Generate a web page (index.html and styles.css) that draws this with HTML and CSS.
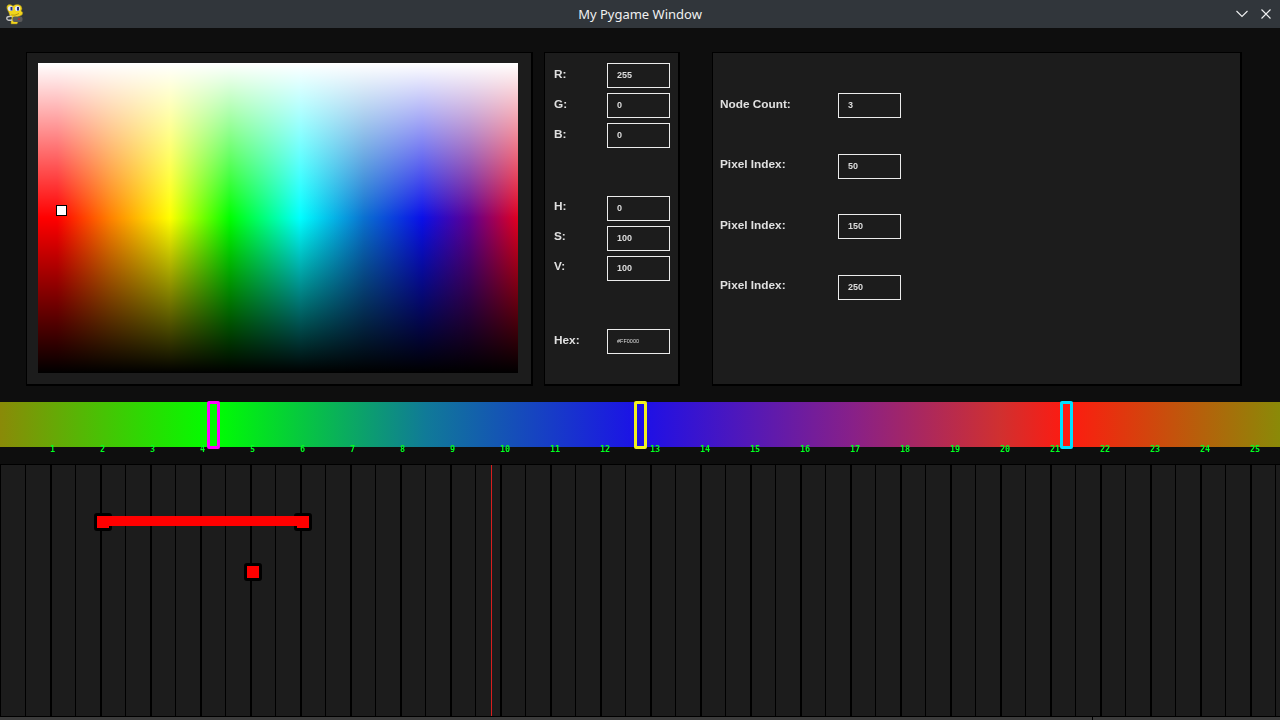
FILE: index.html
```html
<!DOCTYPE html>
<html lang="en">
<head>
    <meta charset="UTF-8">
    <title>My Pygame Window</title>
    <link rel="stylesheet" href="styles.css">
</head>
<body>
    <!-- Title bar -->
    <header class="titlebar">
        <svg class="app-icon" width="18" height="21" viewBox="0 0 18 21">
            <path d="M3 9 L1 5 Q0 1 3 0.5 Q5 0 7 2 Q9 0 12 0.5 Q16 1 16 5 L15 7 Q18 8 16 11 L12 13 L12 18 L11 20 L5 20 L5 17 L6 13 Q3 12 3 9 Z" fill="#f2d41c" stroke="#8a7a20" stroke-width="0.5"/>
            <circle cx="4.5" cy="4.5" r="2.6" fill="#dfe6f2"/>
            <circle cx="11.5" cy="4.5" r="2.6" fill="#dfe6f2"/>
            <rect x="4.5" y="3" width="2" height="3.5" fill="#27307a"/>
            <rect x="11" y="3" width="2" height="3.5" fill="#27307a"/>
            <path d="M5 11 Q9 12 13 9.5" stroke="#a8890f" fill="none" stroke-width="0.8"/>
            <path d="M6 12.5 Q0.5 12 0.8 14.5 Q1 17 6 16" stroke="#c6c6c6" stroke-width="1.4" fill="none"/>
            <rect x="6.5" y="12.5" width="10" height="5.5" rx="2" fill="#5a5a5a"/>
            <rect x="12" y="14" width="2" height="2" fill="#a33535"/>
        </svg>
        <span class="title">My Pygame Window</span>
        <div class="window-buttons">
            <svg width="12" height="8" viewBox="0 0 12 8"><path d="M0.5 1 L6 6.5 L11.5 1" stroke="#eff0f1" fill="none" stroke-width="1.1"/></svg>
            <svg width="10" height="10" viewBox="0 0 10 10"><path d="M0.5 0.5 L9.5 9.5 M9.5 0.5 L0.5 9.5" stroke="#eff0f1" fill="none" stroke-width="1.1"/></svg>
        </div>
    </header>

    <main class="app">
        <section class="top-row">
            <!-- Colour picker -->
            <div class="panel picker-panel">
                <div class="picker">
                    <span class="picker-handle"></span>
                </div>
            </div>

            <!-- Colour values -->
            <div class="panel values-panel">
                <div class="field-group">
                    <div class="field"><label>R:</label><div class="input">255</div></div>
                    <div class="field"><label>G:</label><div class="input">0</div></div>
                    <div class="field"><label>B:</label><div class="input">0</div></div>
                </div>
                <div class="field-group hsv-group">
                    <div class="field"><label>H:</label><div class="input">0</div></div>
                    <div class="field"><label>S:</label><div class="input">100</div></div>
                    <div class="field"><label>V:</label><div class="input">100</div></div>
                </div>
                <div class="field-group">
                    <div class="field"><label>Hex:</label><div class="input input-small">#FF0000</div></div>
                </div>
            </div>

            <!-- Nodes -->
            <div class="panel nodes-panel">
                <div class="node-field"><label>Node Count:</label><div class="input">3</div></div>
                <div class="node-field"><label>Pixel Index:</label><div class="input">50</div></div>
                <div class="node-field"><label>Pixel Index:</label><div class="input">150</div></div>
                <div class="node-field"><label>Pixel Index:</label><div class="input">250</div></div>
            </div>
        </section>

        <!-- LED strip preview -->
        <section class="strip">
            <span class="strip-marker marker-magenta"></span>
            <span class="strip-marker marker-yellow"></span>
            <span class="strip-marker marker-cyan"></span>
        </section>
        <div class="ruler">
            <span>1</span><span>2</span><span>3</span><span>4</span><span>5</span>
            <span>6</span><span>7</span><span>8</span><span>9</span><span>10</span>
            <span>11</span><span>12</span><span>13</span><span>14</span><span>15</span>
            <span>16</span><span>17</span><span>18</span><span>19</span><span>20</span>
            <span>21</span><span>22</span><span>23</span><span>24</span><span>25</span>
        </div>

        <!-- Timeline -->
        <section class="timeline">
            <span class="playhead"></span>
            <span class="clip-bar"></span>
            <span class="clip-node node-a"></span>
            <span class="clip-node node-b"></span>
            <span class="clip-node node-c"></span>
        </section>
        <div class="scrollbar"><span class="scroll-thumb"></span></div>
    </main>
</body>
</html>
```

FILE: styles.css
```css
* {
    margin: 0;
    padding: 0;
    box-sizing: border-box;
}

body {
    width: 1280px;
    height: 720px;
    overflow: hidden;
    background-color: #0e0e0e;
    font-family: 'Liberation Sans', Arial, sans-serif;
    color: #e6e6e6;
}

/* Title bar */
.titlebar {
    height: 28px;
    background-color: #31363b;
    display: flex;
    align-items: center;
    justify-content: center;
    position: relative;
}

.app-icon {
    position: absolute;
    left: 6px;
    top: 4px;
}

.title {
    font-family: 'Noto Sans', sans-serif;
    font-size: 13px;
    color: #eff0f1;
}

.window-buttons {
    position: absolute;
    right: 9px;
    top: 9px;
    display: flex;
    align-items: center;
    gap: 13px;
}

/* Top panels */
.top-row {
    display: flex;
    height: 334px;
    margin-top: 24px;
    padding-left: 26px;
}

.panel {
    background-color: #1c1c1c;
    border-style: solid;
    border-color: #000;
    border-width: 1px 2px 2px 1px;
    height: 100%;
}

.picker-panel {
    width: 507px;
    padding: 10px 11px;
}

.picker {
    width: 480px;
    height: 310px;
    position: relative;
    background:
        linear-gradient(to bottom, rgba(255, 255, 255, 1) 0, rgba(255, 255, 255, 0) 50%, rgba(0, 0, 0, 0) 50%, rgba(0, 0, 0, 1) 100%),
        linear-gradient(to right, #ff0000 0, #ff0000 4%, #ff8000 15%, #ffff00 27.5%, #00ff00 40%, #00ffff 54.6%, #0a70d0 68%, #0a10e8 80%, #600090 90%, #e00020 100%);
}

.picker-handle {
    position: absolute;
    left: 18px;
    top: 142px;
    width: 11px;
    height: 11px;
    background-color: #fff;
    border: 1px solid #000;
}

.values-panel {
    width: 136px;
    margin-left: 11px;
    padding: 10px 8px 0 9px;
}

.field-group {
    display: flex;
    flex-direction: column;
    gap: 5px;
    margin-bottom: 48px;
}

.field {
    display: flex;
    align-items: center;
    justify-content: space-between;
    height: 25px;
}

label {
    font-size: 11.8px;
    font-weight: bold;
    color: #e0e0e0;
    position: relative;
    top: -2px;
    will-change: transform;
}

.hsv-group label {
    top: -3px;
}

.input {
    width: 63px;
    height: 25px;
    border: 1px solid #ececec;
    display: flex;
    align-items: center;
    padding: 0 0 1px 9px;
    font-size: 9px;
    font-weight: bold;
    color: #dcdcdc;
    will-change: transform;
}

.input-small {
    font-size: 5.5px;
    font-weight: normal;
}

.nodes-panel {
    width: 530px;
    margin-left: 32px;
    padding: 40px 0 0 7px;
    display: flex;
    flex-direction: column;
    gap: 35.5px;
}

.node-field {
    display: flex;
    align-items: center;
    height: 25px;
}

.node-field label {
    width: 118px;
}

/* LED strip */
.strip {
    height: 45px;
    margin-top: 16px;
    position: relative;
    background: linear-gradient(to right, #8a8a08 0, #00ff00 213px, #107a98 426px, #1c10e8 640px, #882088 853px, #d03030 1000px, #ff1a10 1067px, #8a8a08 1280px);
}

.strip-marker {
    position: absolute;
    top: -1px;
    width: 13px;
    height: 48px;
    border: 3px solid;
    border-radius: 2px;
    z-index: 2;
}

.marker-magenta {
    left: 207px;
    border-color: #ff00ff;
}

.marker-yellow {
    left: 634px;
    border-color: #f0f020;
}

.marker-cyan {
    left: 1060px;
    border-color: #00e0ff;
}

.ruler {
    display: grid;
    grid-template-columns: repeat(25, 50px);
    height: 18px;
    margin-top: -1px;
    padding-left: 50px;
    position: relative;
    font-family: 'DejaVu Sans Mono', monospace;
    font-size: 8.5px;
    font-weight: bold;
    line-height: 7px;
    color: #00ff20;
    text-align: left;
    will-change: transform;
}

/* Timeline */
.timeline {
    height: 253px;
    position: relative;
    border-top: 1px solid #000;
    border-bottom: 1px solid #000;
    background:
        linear-gradient(#1c1c1c, #1c1c1c) 1px 0 / 1px 100% no-repeat,
        repeating-linear-gradient(to right, #000 0, #000 2px, #1c1c1c 2px, #1c1c1c 25px, #000 25px, #000 26px, #1c1c1c 26px, #1c1c1c 50px);
}

.playhead {
    position: absolute;
    left: 491px;
    top: 0;
    bottom: 0;
    width: 1px;
    background-color: #d81e1e;
}

.clip-bar {
    position: absolute;
    left: 97px;
    top: 51px;
    width: 212px;
    height: 10px;
    background-color: #ff0000;
    z-index: 1;
}

.clip-node {
    position: absolute;
    width: 18px;
    height: 18px;
    background-color: #ff0000;
    border: 3px solid #000;
    border-radius: 3px;
}

.node-a {
    left: 94px;
    top: 48px;
}

.node-b {
    left: 294px;
    top: 48px;
}

.node-c {
    left: 244px;
    top: 98px;
}

.scrollbar {
    height: 3px;
    background-color: #3c3c3c;
    position: relative;
}

.scroll-thumb {
    position: absolute;
    left: 1092px;
    top: 0;
    width: 1px;
    height: 3px;
    background-color: #000;
}
```
